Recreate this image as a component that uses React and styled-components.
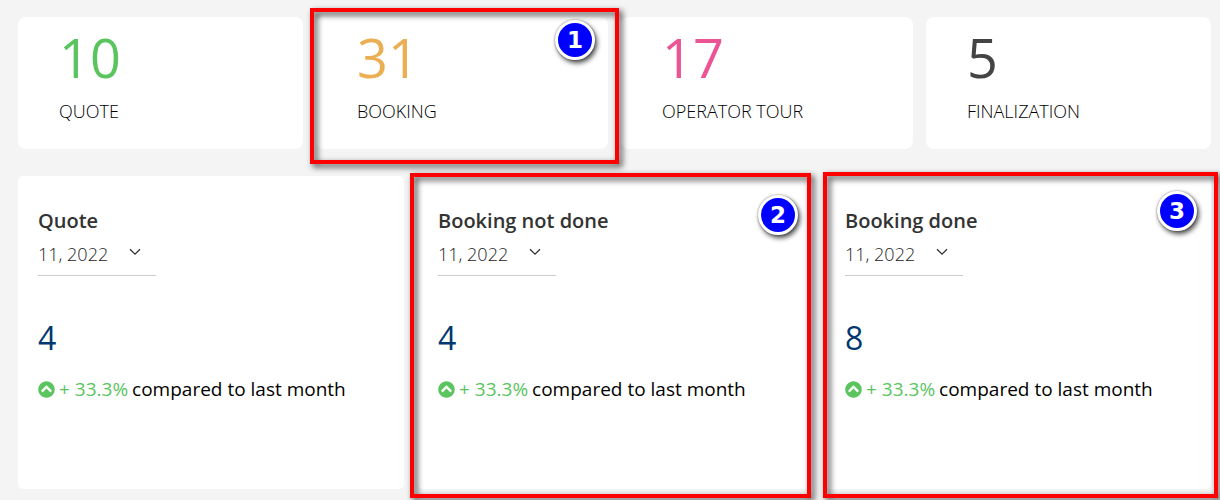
import { useState } from 'react'
import styled, { createGlobalStyle } from 'styled-components'
import { FaChevronCircleUp } from 'react-icons/fa'

const GlobalStyle = createGlobalStyle`
	* {
		box-sizing: border-box;
	}

	body {
		margin: 0;
		background: #f4f4f4;
		color: #000;
		font-family: 'Open Sans', 'Noto Sans', sans-serif;
	}
`

const Page = styled.main`
	display: flex;
	flex-direction: column;
	gap: 27px;
	padding: 17px 9px 11px 18px;
`

const Totals = styled.section`
	display: grid;
	grid-template-columns: 285fr 292fr 292fr 285fr;
	gap: 13px;
`

const Reports = styled.section`
	display: grid;
	grid-template-columns: 386fr 393fr 386fr;
	gap: 14px;
`

const TotalCard = styled.article`
	position: relative;
	padding: 4px 41px 24px;
	border-radius: 8px;
	background: #fff;
`

const TotalValue = styled.div`
	font-size: 54px;
	line-height: 72px;
	color: ${({ color }) => color};
`

const TotalLabel = styled.div`
	padding-top: 4px;
	font-size: 18px;
	font-weight: 300;
	line-height: 28px;
`

const ReportCard = styled.article`
	position: relative;
	padding: 31px 20px 86px;
	border-radius: 5px;
	background: #fff;
`

const ReportTitle = styled.h2`
	margin: 0;
	font-size: 20px;
	font-weight: 600;
	line-height: 28px;
	color: #333;
`

const MonthField = styled.div`
	position: relative;
	width: 118px;
	margin-top: 1px;
	padding-bottom: 4px;
	border-bottom: 1px solid #ccc;

	svg {
		position: absolute;
		top: 12px;
		right: 15px;
		pointer-events: none;
	}
`

const MonthSelect = styled.select`
	display: block;
	width: 100%;
	height: 35px;
	margin: 0;
	padding: 0;
	border: none;
	outline: none;
	background: none;
	appearance: none;
	font-family: inherit;
	font-size: 18px;
	font-weight: 300;
	color: #222;
	cursor: pointer;
`

const ReportValue = styled.div`
	margin-top: 40px;
	font-size: 32px;
	line-height: 44px;
	color: #00386f;
`

const Trend = styled.div`
	display: flex;
	align-items: center;
	gap: 4px;
	margin-top: 15px;
	font-size: 19px;
	line-height: 28px;

	svg {
		color: #5ac45f;
	}
`

const Percent = styled.span`
	color: #5ac45f;
`

const Highlight = styled.div`
	position: absolute;
	z-index: 1;
	inset: ${({ $inset }) => $inset};
	border: 4px solid #f00;
	filter: drop-shadow(3px 3px 3px rgba(0, 0, 0, 0.75));
	pointer-events: none;
`

const Badge = styled.span`
	position: absolute;
	z-index: 2;
	top: ${({ $top }) => $top};
	right: ${({ $right }) => $right};
	display: flex;
	align-items: center;
	justify-content: center;
	width: 40px;
	height: 40px;
	border: 3px solid #fff;
	border-radius: 50%;
	background: #00f;
	box-shadow: 2px 3px 5px rgba(0, 0, 0, 0.7), 0 0 2px rgba(0, 0, 0, 0.5);
	color: #fff;
	font-family: 'DejaVu Sans', sans-serif;
	font-size: 23px;
	font-weight: 700;
	line-height: 28px;
`

const totals = [
	{ label: 'QUOTE', value: 10, color: '#5ac45f' },
	{
		label: 'BOOKING',
		value: 31,
		color: '#ebae53',
		note: { number: 1, inset: '-9px -11px -15px -6px', top: '3px', right: '13px' },
	},
	{ label: 'OPERATOR TOUR', value: 17, color: '#ed5495' },
	{ label: 'FINALIZATION', value: 5, color: '#444' },
]

const reports = [
	{ id: 'quote', title: 'Quote', value: 4 },
	{
		id: 'not-done',
		title: 'Booking not done',
		value: 4,
		note: { number: 2, inset: '-3px 0 -9px -8px', top: '19px', right: '13px' },
	},
	{
		id: 'done',
		title: 'Booking done',
		value: 8,
		note: { number: 3, inset: '-4px -7px -9px -2px', top: '15px', right: '14px' },
	},
]

const Note = ({ note }) => (
	<>
		<Highlight $inset={note.inset} />
		<Badge $top={note.top} $right={note.right}>
			{note.number}
		</Badge>
	</>
)

const Report = ({ report }) => {
	const [month, setMonth] = useState('11, 2022')

	return (
		<ReportCard>
			<ReportTitle id={report.id}>{report.title}</ReportTitle>
			<MonthField>
				<MonthSelect
					aria-labelledby={report.id}
					value={month}
					onChange={(e) => setMonth(e.target.value)}
				>
					<option>11, 2022</option>
				</MonthSelect>
				<svg width='12' height='8' viewBox='0 0 12 8' fill='none'>
					<path d='M1 1.2L6 6.2L11 1.2' stroke='#333' strokeWidth='1.3' />
				</svg>
			</MonthField>
			<ReportValue>{report.value}</ReportValue>
			<Trend>
				<FaChevronCircleUp size={17} />
				<Percent>+ 33.3%</Percent>
				<span>compared to last month</span>
			</Trend>
			{report.note && <Note note={report.note} />}
		</ReportCard>
	)
}

const App = () => {
	return (
		<>
			<GlobalStyle />
			<Page>
				<Totals>
					{totals.map((total) => (
						<TotalCard key={total.label}>
							<TotalValue color={total.color}>{total.value}</TotalValue>
							<TotalLabel>{total.label}</TotalLabel>
							{total.note && <Note note={total.note} />}
						</TotalCard>
					))}
				</Totals>
				<Reports>
					{reports.map((report) => (
						<Report key={report.id} report={report} />
					))}
				</Reports>
			</Page>
		</>
	)
}

export default App
